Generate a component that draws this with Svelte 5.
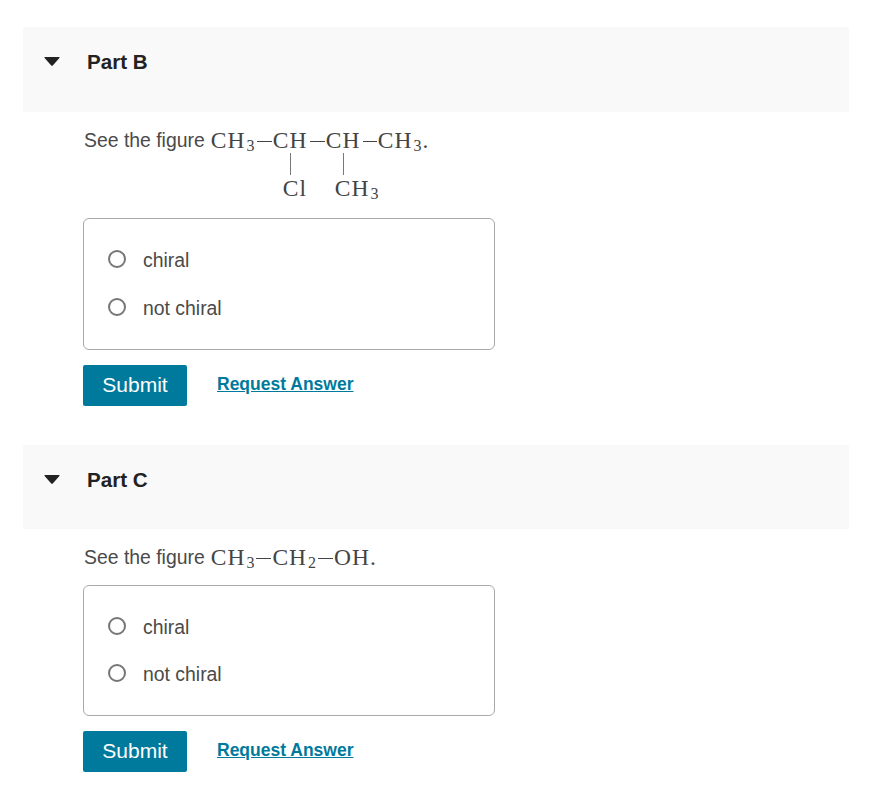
<script lang="ts">
  const opts = ['chiral', 'not chiral'];
</script>

{#snippet choices(name, gap)}
  <div class="choices" style="gap: {gap}px">
    {#each opts as o}
      <label class="choice">
        <span class="radio"></span>
        <span class="label">{o}</span>
      </label>
    {/each}
  </div>
  <div class="actions">
    <button class="submit" type="button">Submit</button>
    <a class="req" href="#{name}">Request Answer</a>
  </div>
{/snippet}

{#snippet head(title)}
  <div class="head">
    <svg class="caret" width="16" height="9" viewBox="0 0 16 9"><path d="M1 0H15Q16.2 0 15.4 1L9 8.2Q8 9.3 7 8.2L.6 1Q-.2 0 1 0Z" fill="#222" /></svg>
    <h2>{title}</h2>
  </div>
{/snippet}

<main class="page">
  <section class="part part-b">
    {@render head('Part B')}
    <div class="body">
      <div class="prompt">
        <span class="lead">See the figure</span>
        <div class="chem">
          <span class="c1">CH<sub>3</sub></span>
          <span class="bond"></span>
          <span class="c2">CH</span>
          <span class="bond"></span>
          <span class="c2">CH</span>
          <span class="bond"></span>
          <span class="c1">CH<sub>3</sub>.</span>
          <span class="down first"></span>
          <span class="down second"></span>
          <span class="sub-cl">Cl</span>
          <span class="sub-me">CH<sub>3</sub></span>
        </div>
      </div>
      {@render choices('b', 23)}
    </div>
  </section>

  <section class="part part-c">
    {@render head('Part C')}
    <div class="body">
      <div class="prompt">
        <span class="lead">See the figure</span>
        <div class="line">
          <span>CH<sub>3</sub></span>
          <span class="bond"></span>
          <span>CH<sub>2</sub></span>
          <span class="bond"></span>
          <span>OH.</span>
        </div>
      </div>
      {@render choices('c', 22)}
    </div>
  </section>
</main>

<style>
  :global(body) {
    background: #fff;
  }

  .page {
    padding: 27px 30px 0 23px;
    font-family: 'Liberation Sans', Arial, sans-serif;
    color: #4a4a4a;
  }

  .part + .part {
    margin-top: 39px;
  }

  .head {
    display: flex;
    align-items: flex-start;
    height: 85px;
    background: #f9f9f9;
    padding: 23px 0 0 21px;
    box-sizing: border-box;
  }

  .part-c .head {
    height: 84px;
  }

  .caret {
    margin-top: 7px;
    overflow: visible;
  }

  h2 {
    margin: 0 0 0 27px;
    font-size: 20.6px;
    line-height: 23px;
    font-weight: 700;
    color: #222;
  }

  .body {
    padding-left: 60px;
  }

  .prompt {
    display: flex;
    align-items: flex-start;
    font-size: 19.4px;
    line-height: 24px;
    padding-top: 16px;
  }

  .lead {
    margin-left: 1px;
    margin-right: 6px;
  }

  .chem,
  .line {
    font-family: 'Liberation Serif', 'Times New Roman', serif;
    font-size: 23.5px;
    line-height: 24px;
    letter-spacing: 1px;
    color: #444;
  }

  .chem {
    display: grid;
    grid-template-columns: 45px 17px 36px 17px 36px 16px auto;
    grid-template-rows: 24px 24px 24px;
    height: 90px;
  }

  .line {
    display: flex;
    align-items: flex-start;
    height: 40px;
  }

  .line .bond {
    width: 15px;
    flex: none;
  }

  sub {
    font-size: 16px;
    line-height: 0;
    vertical-align: -3px;
    letter-spacing: 0;
    margin: 0 1px;
  }

  .bond {
    height: 1px;
    background: #444;
    margin: 13px 1px 0;
  }

  .down {
    grid-row: 2;
    width: 1px;
    height: 22px;
    background: #777;
    margin-top: 1px;
    margin-left: 17px;
  }

  .down.first {
    grid-column: 3;
  }

  .down.second {
    grid-column: 5;
  }

  .sub-cl {
    grid-row: 3;
    grid-column: 3;
    margin-left: 10px;
  }

  .sub-me {
    grid-row: 3;
    grid-column: 5 / 8;
    margin-left: 9px;
  }

  .choices {
    width: 412px;
    height: 132px;
    box-sizing: border-box;
    border: 1px solid #a9a9a9;
    border-radius: 6px;
    display: flex;
    flex-direction: column;
    justify-content: center;
    padding: 0 0 2px 24px;
  }

  .part-c .choices {
    height: 131px;
  }

  .choice {
    display: flex;
    align-items: center;
    gap: 17px;
    height: 25px;
    font-size: 19.4px;
    color: #4a4a4a;
  }

  .label {
    line-height: 23px;
    padding-top: 2px;
  }

  .radio {
    width: 18px;
    height: 18px;
    box-sizing: border-box;
    border: 2px solid #767676;
    border-radius: 50%;
    background: #fff;
    flex: none;
  }

  .actions {
    display: flex;
    align-items: center;
    margin-top: 15px;
  }

  .submit {
    width: 104px;
    height: 41px;
    border: none;
    border-radius: 2px;
    background: #007a9c;
    color: #fff;
    font: 400 21px 'Liberation Sans', Arial, sans-serif;
    padding: 0 0 2px;
  }

  .req {
    margin-left: 30px;
    margin-top: -3px;
    font-size: 17.5px;
    font-weight: 700;
    color: #007a9c;
  }
</style>
